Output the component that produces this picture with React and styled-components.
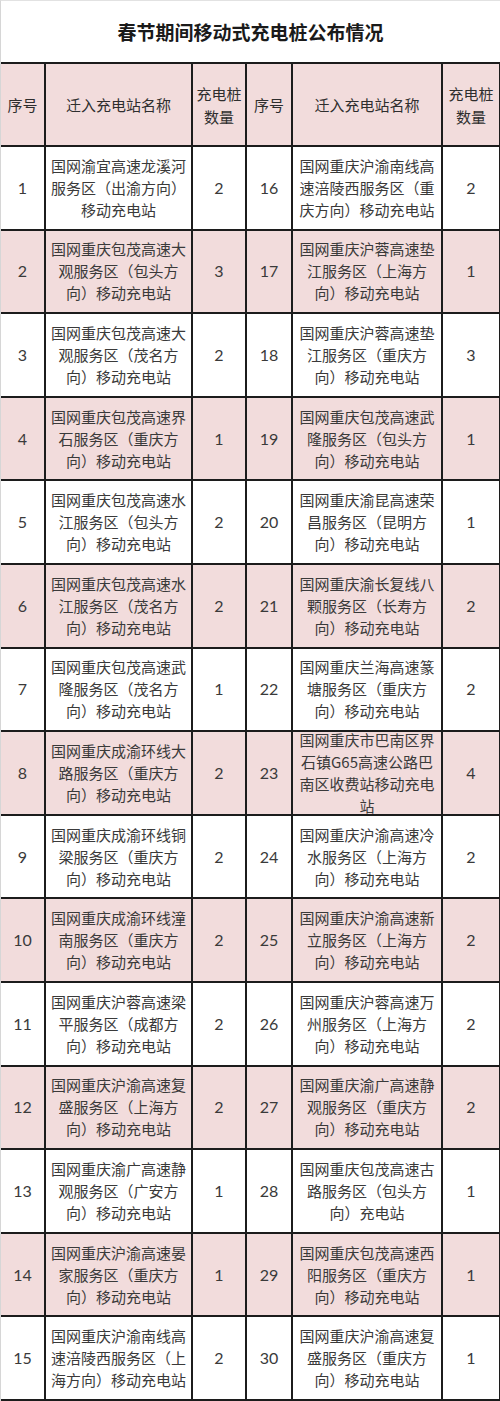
import React from "react";
import styled, { createGlobalStyle } from "styled-components";

const Global = createGlobalStyle`
  html, body { margin: 0; padding: 0; background: #ffffff; }
  body { font-family: "Noto Sans CJK SC", "Noto Sans", sans-serif; }
`;

const LINE = "#1c1c1c";
const PINK = "#f2dcdc";

const Sheet = styled.div`
  width: 500px;
  height: 1401px;
  box-sizing: border-box;
  display: grid;
  grid-template-columns: 45px 147px 54px 46px 150px 58px;
  grid-template-rows: 63px 83px repeat(15, minmax(0, 1fr));
  border-left: 1px solid #d6d6d6;
  border-top: 1px solid #e2e2e2;
  background: #fff;
`;

const Title = styled.div`
  grid-column: 1 / -1;
  display: flex;
  align-items: center;
  justify-content: center;
  border-bottom: 2px solid ${LINE};
  border-right: 1px solid #d6d6d6;
  font-size: 19px;
  font-weight: 700;
  color: #1a1a1a;
`;

const Cell = styled.div`
  box-sizing: border-box;
  display: flex;
  align-items: center;
  justify-content: center;
  text-align: center;
  min-height: 0;
  padding: 0 ${(p) => (p.$pad === undefined ? 3 : p.$pad)}px;
  background: ${(p) => (p.$shade ? PINK : "#ffffff")};
  border-right: 2px solid ${LINE};
  border-bottom: 2px solid ${LINE};
  color: #3a3a3a;
  font-size: 15px;
  line-height: 22px;
  word-break: break-all;
`;

const HeadCell = styled(Cell)`
  background: ${PINK};
  color: #2e2e2e;
  font-size: 15px;
  line-height: 23px;
`;

const NumCell = styled(Cell)`
  font-family: "Lato", "Open Sans", sans-serif;
  font-size: 16px;
  color: #3a3a3a;
`;

const NameCell = styled(Cell)`
  padding: 0 4px;
`;

const left = [
  [1, "国网渝宜高速龙溪河服务区（出渝方向）移动充电站", 2],
  [2, "国网重庆包茂高速大观服务区（包头方向）移动充电站", 3],
  [3, "国网重庆包茂高速大观服务区（茂名方向）移动充电站", 2],
  [4, "国网重庆包茂高速界石服务区（重庆方向）移动充电站", 1],
  [5, "国网重庆包茂高速水江服务区（包头方向）移动充电站", 2],
  [6, "国网重庆包茂高速水江服务区（茂名方向）移动充电站", 2],
  [7, "国网重庆包茂高速武隆服务区（茂名方向）移动充电站", 1],
  [8, "国网重庆成渝环线大路服务区（重庆方向）移动充电站", 2],
  [9, "国网重庆成渝环线铜梁服务区（重庆方向）移动充电站", 2],
  [10, "国网重庆成渝环线潼南服务区（重庆方向）移动充电站", 2],
  [11, "国网重庆沪蓉高速梁平服务区（成都方向）移动充电站", 2],
  [12, "国网重庆沪渝高速复盛服务区（上海方向）移动充电站", 2],
  [13, "国网重庆渝广高速静观服务区（广安方向）移动充电站", 1],
  [14, "国网重庆沪渝高速晏家服务区（重庆方向）移动充电站", 1],
  [15, "国网重庆沪渝南线高速涪陵西服务区（上海方向）移动充电站", 2],
];

const right = [
  [16, "国网重庆沪渝南线高速涪陵西服务区（重庆方向）移动充电站", 2],
  [17, "国网重庆沪蓉高速垫江服务区（上海方向）移动充电站", 1],
  [18, "国网重庆沪蓉高速垫江服务区（重庆方向）移动充电站", 3],
  [19, "国网重庆包茂高速武隆服务区（包头方向）移动充电站", 1],
  [20, "国网重庆渝昆高速荣昌服务区（昆明方向）移动充电站", 1],
  [21, "国网重庆渝长复线八颗服务区（长寿方向）移动充电站", 2],
  [22, "国网重庆兰海高速篆塘服务区（重庆方向）移动充电站", 2],
  [23, "国网重庆市巴南区界石镇G65高速公路巴南区收费站移动充电站", 4],
  [24, "国网重庆沪渝高速冷水服务区（上海方向）移动充电站", 2],
  [25, "国网重庆沪渝高速新立服务区（上海方向）移动充电站", 2],
  [26, "国网重庆沪蓉高速万州服务区（上海方向）移动充电站", 2],
  [27, "国网重庆渝广高速静观服务区（重庆方向）移动充电站", 2],
  [28, "国网重庆包茂高速古路服务区（包头方向）充电站", 1],
  [29, "国网重庆包茂高速西阳服务区（重庆方向）移动充电站", 1],
  [30, "国网重庆沪渝高速复盛服务区（重庆方向）移动充电站", 1],
];

export default function App() {
  return (
    <>
      <Global />
      <Sheet>
        <Title>春节期间移动式充电桩公布情况</Title>
        <HeadCell>序号</HeadCell>
        <HeadCell>迁入充电站名称</HeadCell>
        <HeadCell $pad={0}>充电桩数量</HeadCell>
        <HeadCell>序号</HeadCell>
        <HeadCell>迁入充电站名称</HeadCell>
        <HeadCell $pad={0}>充电桩数量</HeadCell>
        {left.map((row, i) => {
          const r = right[i];
          const shade = i % 2 === 1;
          return (
            <React.Fragment key={row[0]}>
              <NumCell $shade={shade}>{row[0]}</NumCell>
              <NameCell $shade={shade}>{row[1]}</NameCell>
              <NumCell $shade={shade}>{row[2]}</NumCell>
              <NumCell $shade={shade}>{r[0]}</NumCell>
              <NameCell $shade={shade}>{r[1]}</NameCell>
              <NumCell $shade={shade}>{r[2]}</NumCell>
            </React.Fragment>
          );
        })}
      </Sheet>
    </>
  );
}
